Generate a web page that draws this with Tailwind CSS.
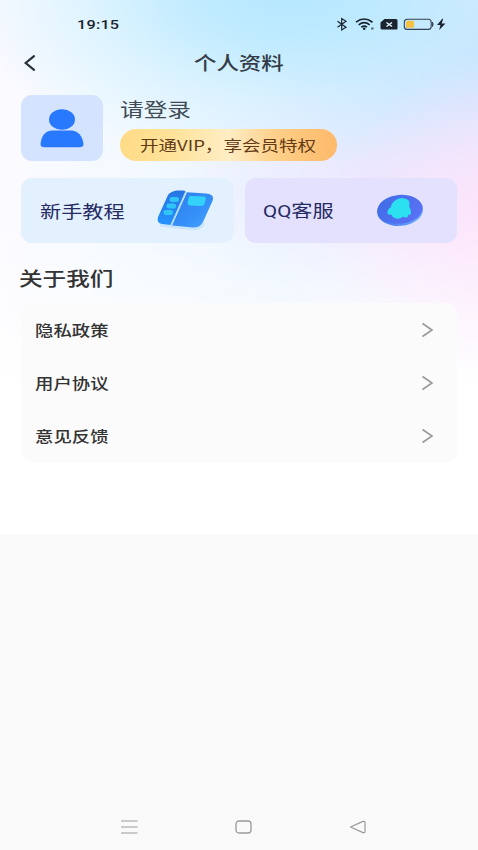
<!DOCTYPE html>
<html lang="zh-CN">
<head>
<meta charset="utf-8">
<meta name="viewport" content="width=device-width, initial-scale=1">
<title>个人资料</title>
<script src="https://cdn.jsdelivr.net/npm/@tailwindcss/browser@4"></script>
</head>
<body class="bg-[#fafafa] font-['Noto_Sans_CJK_SC',sans-serif] text-[#333]">
<div class="flex h-[850px] w-[478px] flex-col overflow-hidden">
  <main class="h-[534px] shrink-0 bg-white bg-[linear-gradient(to_bottom,transparent_0px,transparent_210px,rgba(255,255,255,0.5)_310px,#fff_388px),radial-gradient(ellipse_170px_180px_at_500px_235px,#fde3fa_0%,rgba(252,228,251,0.8)_35%,rgba(252,230,251,0)_100%),radial-gradient(ellipse_330px_175px_at_290px_-10px,#b5e7ff_0%,rgba(188,234,255,0.9)_30%,rgba(200,238,255,0.5)_62%,rgba(210,240,255,0)_100%),radial-gradient(ellipse_230px_160px_at_478px_50px,#c8e2ff_0%,rgba(205,228,255,0.8)_40%,rgba(215,232,255,0)_100%),radial-gradient(ellipse_210px_120px_at_380px_180px,rgba(236,230,255,0.9)_0%,rgba(236,232,255,0)_100%),linear-gradient(to_right,#fbfaff_0px,#f5faff_100px,#ebf5ff_280px,#f6f0ff_478px)]">
    <header>
      <div class="flex h-12 items-center justify-between pr-[29px] pl-[77px] text-[#1b2530]">
        <span class="origin-left scale-x-[1.2] font-['Roboto',sans-serif] text-[13.5px] font-medium tracking-[0.2px]">19:15</span>
        <svg class="h-4 w-[114px]" viewBox="0 0 114 16" fill="none">
          <path d="M2.500 5.200l8.500 6-4.300 2.800V2.500L11 5.200l-8.500 6" stroke="#1b2530" stroke-width="1.200"/>
          <g stroke="#1b2530" stroke-width="1.700">
            <path d="M21 6.200q8-6.400 16.500 0M23.700 8.800q5.500-4.300 11 0M26.300 11.200q3-2.200 5.700 0"/>
          </g>
          <circle cx="29.200" cy="12.700" r="1.300" fill="#1b2530"/>
          <circle cx="37.300" cy="12.500" r="1.300" fill="#5b6b78"/>
          <path d="M49.500 3h11.500a1.500 1.500 0 0 1 1.500 1.500v8a1 1 0 0 1-1 1H47a1.500 1.500 0 0 1-1.500-1.500V6.500z" fill="#1b2530"/>
          <path d="M51.500 6.500l5.500 4M57 6.500l-5.500 4" stroke="#e1f3ff" stroke-width="1.500"/>
          <rect x="69.300" y="3.200" width="26.900" height="10.200" rx="3" stroke="#33424e" stroke-width="1.100"/>
          <rect x="71" y="4.800" width="8" height="7" rx="1.500" fill="#f6c042"/>
          <path d="M97.400 6q1.500 2.200 0 4.500z" fill="#33424e" stroke="#33424e"/>
          <path d="M107.300 2.700l-5.300 6.300h3.400l-1.200 5 6.300-6.600h-3.800l1.500-4.700z" fill="#1b2530"/>
        </svg>
      </div>
      <div class="grid h-[30px] grid-cols-[171px_90px_1fr] items-center pr-4 pl-[23px]">
        <svg class="h-[18px] w-[14px]" viewBox="0 0 14 18" fill="none"><path d="M11 2.200L2.700 9l8.300 6.800" stroke="#29323b" stroke-width="2.200" stroke-linecap="round"/></svg>
        <h1 class="origin-left scale-x-[1.2] pb-[2px] text-[18.700px] leading-none font-medium whitespace-nowrap text-[#333c46]">个人资料</h1>
      </div>
    </header>

    <section class="flex gap-[17px] pt-[17px] pl-[21px]">
      <div class="flex h-[66px] w-[82px] items-center justify-center rounded-[11px] bg-[#d4e3ff]">
        <svg class="h-[40px] w-[44px]" viewBox="0 0 44 40" fill="#2979ff"><ellipse cx="22" cy="11.500" rx="13" ry="10.300"/><path d="M.5 36C1.500 28 5 22.600 12.500 22.600h18.500c7 0 11.500 5.400 12.500 13.400q0 3.200-4 3.200h-35q-4 0-4-3.200z"/></svg>
      </div>
      <div class="flex flex-col justify-between">
        <p class="flex h-[28px] w-[72px] items-center"><span class="origin-left scale-x-[1.22] text-[19.400px] leading-none whitespace-nowrap text-[#414b55]">请登录</span></p>
        <button class="flex h-[32px] w-[217px] items-center rounded-full bg-[linear-gradient(90deg,#ffdb86_0%,#ffe39b_25%,#ffedc4_50%,#ffcf88_72%,#ffb96b_100%)] pl-[20px]"><span class="origin-left scale-x-[1.22] text-[15.200px] leading-none whitespace-nowrap text-[#633a16]">开通VIP，享会员特权</span></button>
      </div>
    </section>

    <section class="grid grid-cols-2 gap-[11px] pt-[17px] pr-[21px] pl-[21px]">
      <div class="flex h-[65px] items-center justify-between rounded-[11px] bg-[#e3f1ff] pr-[20px] pl-[19px]">
        <span class="origin-left scale-x-[1.21] text-[17.500px] leading-none whitespace-nowrap text-[#272b63]">新手教程</span>
        <svg class="h-[44px] w-[60px]" viewBox="0 0 60 44">
          <defs>
            <linearGradient id="book" x1="0" y1="0" x2="1" y2="1"><stop stop-color="#2f7eea"/><stop offset=".6" stop-color="#3590f8"/><stop offset="1" stop-color="#4aa6ff"/></linearGradient>
            <linearGradient id="spine" x1="0" y1="0" x2="0" y2="1"><stop stop-color="#2874e2"/><stop offset="1" stop-color="#2393ff"/></linearGradient>
          </defs>
          <path d="M6 36l13 2 22 2q6 0 9-6" fill="none" stroke="#c9e4ff" stroke-width="2.500"/>
          <path d="M14 6q3-4 9-4.500h6q2 0 2.500 1L16.500 36 8 35Q2.500 34 4 28z" fill="url(#spine)"/>
          <path d="M33 3.300l19 1.200q9 .5 6.500 7.500L49 33q-3 6-10 5.500L18 36.500z" fill="url(#book)"/>
          <path d="M32 2.500L17.300 36.500" stroke="#a6dbff" stroke-width="1.200"/>
          <g fill="#2fc6f6"><rect x="15.500" y="8" width="9.500" height="5" rx="2.300"/><rect x="12.500" y="14.500" width="9.500" height="5" rx="2.300"/><rect x="9.500" y="21" width="9.500" height="5" rx="2.300"/></g>
          <path d="M36 7l13.500.6q3 0 2.200 3l-1 4.200q-.8 2.200-3.200 2.200l-11.500-.6q-3-.4-2.200-3.200l.9-4.100q.3-2.100 1.300-2.100z" fill="#33d2fa"/>
        </svg>
      </div>
      <div class="flex h-[65px] items-center justify-between rounded-[11px] bg-[#e3e1fd] pr-[32px] pl-[18px]">
        <span class="origin-left scale-x-[1.21] text-[17.500px] leading-none whitespace-nowrap text-[#272b63]"><span class="font-['Roboto',sans-serif] text-[17px]">QQ</span>客服</span>
        <svg class="h-[38px] w-[50px]" viewBox="0 0 50 38">
          <defs>
            <linearGradient id="coin" x1="0" y1="0" x2="1" y2=".5"><stop stop-color="#3e6de6"/><stop offset="1" stop-color="#5a70f4"/></linearGradient>
            <linearGradient id="rim" x1="0" y1="0" x2="1" y2="0"><stop stop-color="#3f6fee"/><stop offset="1" stop-color="#6fb0ff"/></linearGradient>
          </defs>
          <ellipse cx="25" cy="18.700" rx="23" ry="15.200" transform="rotate(-5 25 18)" fill="url(#rim)"/>
          <ellipse cx="25" cy="17.300" rx="22.600" ry="14.400" transform="rotate(-5 25 17)" fill="url(#coin)"/>
          <path d="M19.500 9Q24 5 29.500 6.500q4.500.5 5 4.500l-.2 4q2.500 4 1.400 7.500l-2.200.3q-.3 3-3 2.700l-2.500-.8q-4 3.300-7.500 1.500-3.500-.7-3.500-3.200l-4.300-.8Q11.500 18 16 15q.5-4 3.500-6z" fill="#2be0ef"/>
        </svg>
      </div>
    </section>

    <h2 class="flex h-[60px] items-center pt-[10px] pl-[19px]"><span class="origin-left scale-x-[1.21] text-[19.500px] leading-none font-medium whitespace-nowrap">关于我们</span></h2>

    <ul class="mx-[21px] rounded-[11px] bg-[#fbfbfb]">
      <li class="flex h-[53px] items-center justify-between pr-[23px] pl-[14px]">
        <span class="origin-left scale-x-[1.21] text-[15.200px] leading-none font-medium whitespace-nowrap">隐私政策</span>
        <svg class="h-4 w-[13px]" viewBox="0 0 13 16" fill="none"><path d="M1.500 1.500L11 8l-9.500 6.500" stroke="#999" stroke-width="1.600"/></svg>
      </li>
      <li class="flex h-[53px] items-center justify-between pr-[23px] pl-[14px]">
        <span class="origin-left scale-x-[1.21] text-[15.200px] leading-none font-medium whitespace-nowrap">用户协议</span>
        <svg class="h-4 w-[13px]" viewBox="0 0 13 16" fill="none"><path d="M1.500 1.500L11 8l-9.500 6.500" stroke="#999" stroke-width="1.600"/></svg>
      </li>
      <li class="flex h-[53px] items-center justify-between pr-[23px] pl-[14px]">
        <span class="origin-left scale-x-[1.21] text-[15.200px] leading-none font-medium whitespace-nowrap">意见反馈</span>
        <svg class="h-4 w-[13px]" viewBox="0 0 13 16" fill="none"><path d="M1.500 1.500L11 8l-9.500 6.500" stroke="#999" stroke-width="1.600"/></svg>
      </li>
    </ul>
  </main>

  <nav class="mt-auto flex h-[47px] items-center justify-between pr-[111px] pl-[120px]">
    <svg class="h-4 w-[18px]" viewBox="0 0 18 16" stroke="#9a9a9a" stroke-width="1.200"><path d="M1 2h16.500M1 8h16.500M1 14h16.500"/></svg>
    <svg class="h-4 w-[18px]" viewBox="0 0 18 16" fill="none" stroke="#9a9a9a" stroke-width="1.300"><rect x="1" y="2" width="15" height="12" rx="3"/></svg>
    <svg class="h-4 w-[18px]" viewBox="0 0 18 16" fill="none" stroke="#9a9a9a" stroke-width="1.200" stroke-linejoin="round"><path d="M1.500 8l12.500-5.600q2-.4 2 1.200v8.800q0 1.600-2 1.200z"/></svg>
  </nav>
</div>
</body>
</html>
